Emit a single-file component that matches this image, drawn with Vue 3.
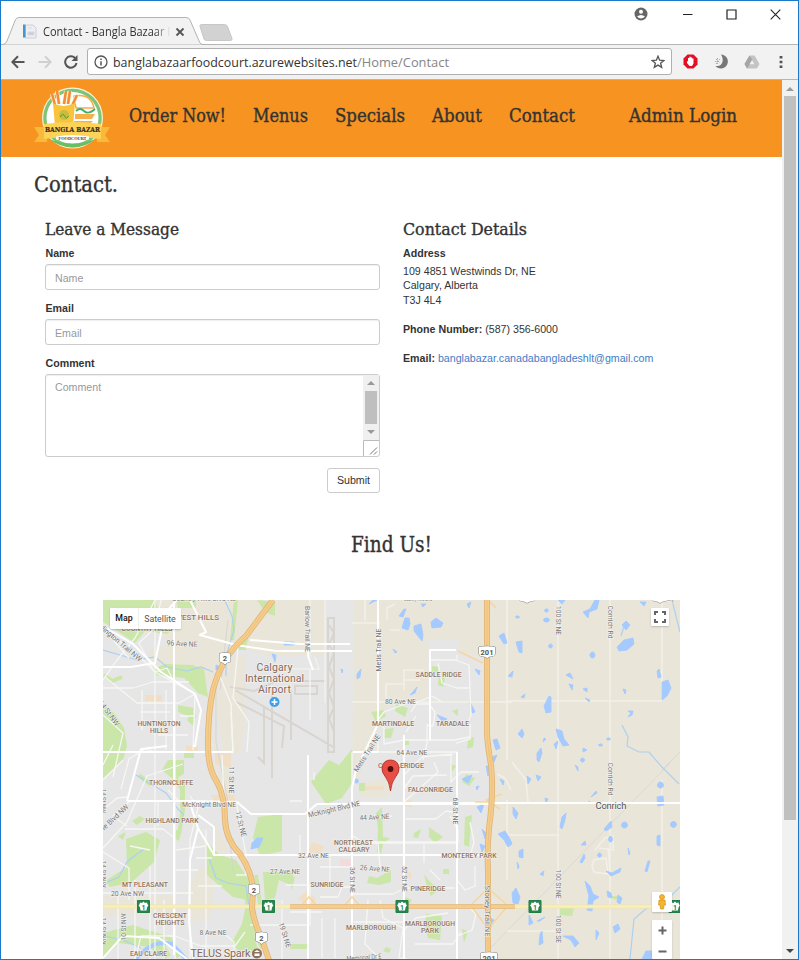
<script setup>
import { h } from 'vue'

// A single line of text set to a fixed measure; colour and font are inherited.
const FitText = (props) =>
  h('svg', { class: 'fit', width: props.w, height: props.lh, viewBox: `0 0 ${props.w} ${props.lh}` }, [
    h('text', { x: 0, y: props.base, textLength: props.w, lengthAdjust: 'spacingAndGlyphs', fill: 'currentColor' }, props.t),
  ])
FitText.props = ['t', 'w', 'lh', 'base']

const nav = [
  { t: 'Order Now!', w: 97 },
  { t: 'Menus', w: 55 },
  { t: 'Specials', w: 70 },
  { t: 'About', w: 50 },
  { t: 'Contact', w: 66 },
  { t: 'Admin Login', w: 108 },
]

// text, centre x, centre y, width, rotation
const districts = [
  ['HARVEST HILLS', 190, 618, 58], ['COUNTRY HILLS', 147, 629, 51], ['HUNTINGTON', 159, 724, 43], ['HILLS', 159, 731, 18],
  ['SADDLE RIDGE', 438.5, 675, 46], ['MARTINDALE', 393, 724, 42], ['TARADALE', 452.5, 724, 33], ['CASTLERIDGE', 401, 766, 46],
  ['THORNCLIFFE', 171, 783, 44], ['HIGHLAND PARK', 172, 821, 53], ['MT PLEASANT', 145, 884.5, 46], ['CRESCENT', 170, 916, 34],
  ['HEIGHTS', 170, 923, 29], ['EAU CLAIRE', 148.5, 954, 37], ['FALCONRIDGE', 430.5, 790, 45], ['NORTHEAST', 353.5, 842.5, 39],
  ['CALGARY', 354, 849.5, 31], ['MONTEREY PARK', 469, 855.5, 55], ['SUNRIDGE', 327, 885, 33], ['PINERIDGE', 428, 889, 35],
  ['MARLBOROUGH', 371, 927.5, 50], ['MARLBOROUGH', 430, 924, 50], ['PARK', 430, 931, 18],
]
const streets = [
  ['Country Hills Blvd NE', 204, 598.5, 64, 0], ['Country Hills Blvd', 418, 598.5, 28, 0], ['Country', 665, 598.5, 18, 0],
  ['96 Ave NE', 182, 643.5, 31, 3], ['rlington Trail NW', 121, 643, 52, 40], ['14 St NW', 109, 713, 30, 54],
  ['11 St NE', 232, 780, 27, 90], ['Barlow Trail NE', 308, 629, 46, 90], ['Metis Trail NE', 378, 650, 43, -90],
  ['80 Ave NE', 400.5, 701.5, 31, 0], ['Metis Trail NE', 367, 753, 43, -57], ['64 Ave NE', 412, 752.5, 31, 0],
  ['100 St NE', 558.5, 620.5, 29, 90], ['Conrich Rd', 610.5, 622, 33, 90], ['Conrich Rd', 610.5, 779, 33, 90],
  ['McKnight Blvd NE', 209, 804, 54, 0], ['ie Blvd NW', 115, 817, 34, -43], ['12 St NE', 241, 824, 26, 76],
  ['27 Ave NE', 285, 871.5, 30, 0], ['20 Ave NW', 127.5, 893.5, 33, 0], ['8 Ave NE', 213, 932, 27, 0],
  ['10 St NW', 123.5, 927, 27, -90], ['19 St NE', 285, 935, 26, 72], ['14 St NW', 104, 801, 24, 90],
  ['14 St NW', 104, 874, 27, 90], ['14 St NW', 104, 931, 27, 90], ['McKnight Blvd NE', 334, 809, 53, -13],
  ['44 Ave NE', 374.5, 817, 30, -3], ['32 Ave NE', 313.5, 855.5, 31, 0], ['26 Ave NE', 375, 868.5, 30, 4],
  ['36 St NE', 353, 880, 26, 90], ['52 St NE', 404.5, 879, 26, 90], ['68 St NE', 456, 811, 27, 90],
  ['Stoney Trail NE', 487.5, 911, 51, 90], ['Memorial Dr E', 364, 957.5, 35, -4], ['100 St NE', 558.5, 884, 29, 90],
  ['100 St SE', 558.5, 929, 28, 90],
]

const parks = [
  'M103 600h52l4 12 16 15-8 7-22-3-10 12-22-15-10-6z', 'M152 669l14-5 26 1 12 4 4 28-10-4-14-15-28-3z',
  'M103 704l12 10 9 14 3 18-4 14-12 12-8 6z', 'M126 839l20-7 14 8-6 22-22 20-22 5-5-6 22-14z',
  'M206 842l14 13 16 5 18 28-1 13-20-4-26-22z', 'M258 817l24-3v37l-22 5-7-18z',
  'M311 782l18-22 10 5 13-16v34l-10 15-16 6z', 'M246 905l12 45-16 6-10-14 10-18z', 'M263 872h30v14l-14-6-4 18-10 2z',
  'M103 933l30-8 24 8 14 22-6 4-16-12-30-4-16 16z', 'M132 821l8-5 5 3-8 6z', 'M176 600h20v8h-18z',
  'M168 760h16v14l-10 6-12-10z', 'M240 638h8l-2 12h-8z', 'M257 600l18 2v14l-10-4z', 'M178 705l16 3-2 10-14-6z',
  'M184 752h10v6h-10z', 'M192 711l4 5-3 10-6-6z', 'M371 712l12-2 3 6-10 6z', 'M384 729l10-1-3 10h-7z', 'M403 740h6v5h-6z',
  'M396 704l12 4-3 9-10-6z', 'M439 674l6 4-2 9-5-2z', 'M432 666l7 1-1 6-6-1z', 'M452 711l6-2v7z', 'M468 739l6-2-1 10-6 2z',
  'M450 764l6 2-4 6z', 'M466 774l9 4-6 8-7-4z', 'M376 813l6-6 1 30 7 1-7 6-2 10-4-2 1-22z', 'M414 833l7-4-3 9-5-1z',
  'M429 827l14 10-8 6-6-6z', 'M465 817l7-2-3 32-5-2z', 'M369 876l8 2 14-8v12l-12 3-12-2z', 'M424 874l6 8 9 7-8 7-4-9z',
  'M443 869h6v5h-6z', 'M426 914l16 2-2 24-12-2-3-12z', 'M462 929l6 2-4 12z', 'M386 947l5 2-2 4-6-2z', 'M404 896l8 4-7 12z',
  'M176 830l5 2-2 9-5-3z', 'M118 836l8-4-3 8z', 'M290 944h18v5h-18z', 'M290 881l5-5-3 14z',
  'M560 908h14l-2 8-12-1z', 'M609 896h10l-3 4z', 'M359 783h6v8h-6z',
]
const greens = 'M140 600l5 18 26 6M183 780v30l-4 24M260 905l-4-30M104 675l8 6 10-4M222 872l24 24 4 22 12 30M174 775l8 14v20M150 933l20 6 8 18M236 600l-4 40M139 775l12 10'

const tanBlocks = [
  'M155 600h170v55h-62l-28-10-16 26-8 38-2-24-30-16-26 0-4-20 18-3z', 'M354 600h326v359h-186l-3-95 4-75-6-40 0-84-9-8-20-6v-12h-32v60h-30l-20 20v28l-12 12-6 18-8 10z',
  'M210 712l8 34 14 34-2 24-12-28z', 'M222 655h24v60l-6 38h-16l-10-50z', 'M103 896h70v20h-70z', 'M186 890l14-24 14 10-4 44-20 2z', 'M214 820l12 26 4 26-14-12z',
  'M359 783l26-4 6 12-4 6h-28z',
]
const warmBlocks = [
  'M145 695h17v6h-17z', 'M215 752h16v16l-16-4z', 'M186 745l12 2v6h-12z', 'M211 795h24v12h-18z', 'M312 842l12 4-4 10-12-3z', 'M362 786h22v4h-22z', 'M405 800h7v7h-7z', 'M298 898l10-8 8 10-6 8z', 'M405 872h6v8z',
]
const minor = [
  'M103 630l30 20 22 22 40 22-16 9h-42l-32-26', 'M103 680l14-20 18-22 20-38', 'M155 673l-16-30 16-15 6-28', 'M155 600v70v290',
  'M175 960V810 684l-8-16-12 4', 'M155 752l-10-3-16 10-8 30', 'M155 752h78l-2-48-12-30', 'M195 694l-2 56', 'M103 688h30l20-6h36',
  'M103 715l20 18-10 44', 'M222 755l2 45', 'M233 752l-2-40M247 752l2-30-16-24 6-60', 'M135 960l6-24 34 0 26 10h34l10-14', 'M103 848l24-26 20-46 36-12',
  'M127 826l-14-10 17-15', 'M103 852l26 16 0 32', 'M125 829h38l10 8', 'M103 780l20-20M103 810l14-12 11-1', 'M190 960V840l8-32-8-12',
  'M206 830v130M103 893h90M118 896v63M135 880v80M150 866v94M164 900v60', 'M250 925h60v-40h-24M282 900v59', 'M220 930l14 12v17',
  'M236 801l10 54 0 20h-10', 'M310 669v51', 'M457 660v-5',
  'M430 660h25l14 5 2 50-4 10M438 663l4 20 15 5h12',
  'M378 720l6-8 26-10 8 0 14-6 10 6', 'M411 712l5-8h13l6 8-2 14-6-1v18l-4 17M416 716l-10 16M378 720l6 8v16l20-4h50l16-3M378 736v16M470 724v15l-14 4',
  'M457 752v208M404 752v206M353 752h104M352 752v208', 'M403 790l10-14 34-1M404 775l18-18 31-3M451 754v28l10-10 18 0M434 762l4 10-34 30',
  'M384 776l16-14M404 819h32l10-8 12 2M370 818l22-2M353 836l10 6h95v-12l-8-14', 'M352 843h106M320 897h18l4-10h11M353 894h40l12-6h50',
  'M460 856h10l4-14-4-20M457 880l8 10 10-4v-20', 'M354 922h50M368 900l-3 44 14 14M404 930l12-12 32-5M415 944h38l8-12M458 936l14-6 4-16-8-8',
  'M380 900l3 18 20 10-4 30 8 1M314 780v-8M290 801h12M322 918l0 40M335 918v40M290 912h32M320 867h33',
  'M103 765l10-20M142 690v40M166 690v60M140 712h30M158 735h30M113 640l16 18M180 716h14M168 790l12 12M158 800v26M206 846l-30 4M130 846l20 4M196 858h16M198 886h24M176 870h22M300 835v20M330 855v28M378 843l2 24M424 843v20M430 870l10 10',
]
const faint = [
  'M507 600v160M507 701h155M558 600v359M610 600v359M662 600v101M662 780v179M507 835h52M507 800v80M507 931h51M511 790l-6-12-8-4M512 762l14 18 2 22',
  'M595 850l10-12 8-2v14l-14-2M592 866l2-6 12-2 2 16-14-2zM610 870l-2-22', 'M352 702h160', 'M310 600v57M325 600v103M289 669h30l-4-12', 'M352 623h28M365 600v21',
  'M387 620v-12l8-4M390 630h10M404 690v-20h20M404 680h16M386 700v-16h18',
]
const major = [
  'M103 667l28 0 24-4 10-50 12-13', 'M103 626l30 18 28 28 34 22 6 16-6 36h-2', 'M103 752h130', 'M127 801h62l48 1 14 12h54l12-10h175', 'M127 801l14-52 26-3',
  'M189 800l9 28 12 20 4 7h86M174 600v355M198 828l-8 32-1 62 4 37', 'M190 600l16 32-6 3 36 10 40 6h76', 'M378 600v124l-22 46-4 18v171', 'M308 755V960',
  'M290 855h200M353 752h25M404 735v224M457 752v207M352 803h328M308 640v16l5 14', 'M430 740v-90h26',
  'M103 958l20-22 36 2 28 21', 'M214 855v-28l-16-12', 'M250 640l50 4h50',
]
const runways = 'M328 618v134h6V618zM329 625l5 8-5 12 5 8-5 14 5 12-5 14 5 14-5 12 5 12M291 690v50M264 707v56l-6-6M272 688v90M235 690l100 58M230 687l24 4 22-10h50M236 702l48 24-2 22M295 686h22v8h-22z'
const rural = 'M480 959l190-196M662 770l18-18'
const creeks = 'M103 650l34 10 18-3 12 10 20 4 14-4 12 5M136 775l30 18 12 16 6 6M103 884l16-7 8-15 10-8 9-6M209 858l7 20 12 5 18 3 3 20 14 38 7 16M622 725l6 12-1 9 12 6h10l12 14 18 18M672 600l8 32M103 936l20 4 18 8M624 626l-3 10M630 959l4-40 14-12 14-2 18-18M225 601l7 15 2 14-8 26 0 20'
const lakes = [
  'M617 647l7-7 9-2 1 6-7 6-8 1z', 'M622 625l4-4 4 4-4 5z', 'M583 612l7-3 5-9h4l-2 9-8 3-1 6z', 'M662 682l6-2 3 8-4 8-5 4z', 'M544 706l5-10 2 1v15l-5 1z', 'M558 600h7l-3 4z',
  'M499 636l5-3 3 10-3 1z', 'M516 642l6-1v12l-3-1z', 'M508 676l5-5-1 6z', 'M566 675l4-2 3 6z', 'M569 684l4 1-1 5z', 'M583 689l4-1v4z', 'M585 698l5 2-1 2z',
  'M657 671l2-2 2 8-3 1z', 'M592 658a2.500 3 0 1 1 1 0z', 'M546 612a2 1.500 0 1 1 1 0z', 'M546 622a3 2 0 1 1 1 0z', 'M517 618a2 1 0 1 1 1 0z', 'M550 648a2 2 0 1 1 1 0z', 'M521 697l4-3-1 4z',
  'M623 689l3 1-1 4z', 'M628 711l5 0-1 4-4 2 3-4z', 'M518 734l4-5 2 5-2 4z', 'M556 729l6 2 2 8 5 6-6 1-5-9z', 'M537 753l4-5 1 5-3 9-2-2z', 'M554 744l4-3-2 8z',
  'M493 740l4-1 3 9-4 2z', 'M492 757l5-2-3 7z', 'M486 766h4l-2 10z', 'M583 748l4 2-4 2z', 'M575 765l3 2v4z', 'M582 762a2 2 0 1 1 1 0z', 'M544 738l2 1-3 3z', 'M608 740a2 1 0 1 1 1 0z', 'M600 746a2 1 0 1 1 1 0z',
  'M527 776l4 3-3 5z', 'M500 779l4 2-1 4z', 'M545 798l3 1-2 4z', 'M562 817l4-4-1 7-3 9-2-2z', 'M513 807l5 6-2 6-3-5z', 'M498 834l7-3 5 8 2 5-4 3-4-7z', 'M519 851l4-2v9l-4-1z',
  'M657 797l6-1 1 9-6 1z', 'M660 788a3 3 0 1 1 1 0z', 'M675 827a3 3 0 1 1 1-1z', 'M657 836l3-1v11l-3-1z', 'M624 828a3 3 0 1 1 1 0z', 'M604 829l7-8 1 6-6 4z', 'M610 842a2 3 0 1 1 1 0z', 'M581 845l4-4 1 4z', 'M580 862l4-8 1 4-3 5z',
  'M599 857a2 2 0 1 1 1 0z', 'M645 871l3-10h2l-3 11z', 'M606 871l6 2 9-5-1 4-9 4z', 'M591 797l5-6 1 2z', 'M587 803l3-2-2 3z', 'M536 775l5 2-3 4z', 'M585 881l5 5 3 8 6 3-6 4-1 10-5-1 2-14z', 'M512 893l4-5 4 9-2 7-5-1z',
  'M607 891l4 2 1 5-4-1z', 'M618 895l4 3-2 6-3-2z', 'M613 927l5-3 2 5-5 4z', 'M540 934l2-3 1 12-4 2z', 'M596 930l3 3-3 7z', 'M540 874l4-3-1 5z', 'M529 915l4 8-4 2z', 'M563 936l10 0 6 7-4 4-4-7z', 'M537 921l8-4-5 4z', 'M642 959l4-8h6v8z', 'M486 916l8 4-6 14z', 'M517 862l2 4-1 3z', 'M628 848l2 5-1 2z',
  'M482 829l4 4-1 6z', 'M480 844l5 2-3 6z', 'M477 807l7-3-3 9z', 'M462 779l10-4-4 8z', 'M399 616l5-7 2 0-3 8zM402 628l3-10 4 0 1 6-2 6z', 'M414 626l7-2 2 11-1 6-8-10z', 'M431 622l5-4 7 5-2 4-9 1z', 'M421 604l5 0-3 3z', 'M393 649l4 3-2 1z', 'M357 674l4-5-1 8-3 2z', 'M341 669l2 1-1 3z', 'M412 693l5-6-2 6-5 2z', 'M470 702l5 10-3 1z', 'M437 715l10 4-5 2z', 'M252 843l5-5 6 0-4 9-8 2z', 'M284 642h10v3h-10z', 'M272 654l4 1-1 7z', 'M216 665l4 2-4 3z', 'M356 783a2 2 0 1 1 1 0z', 'M369 604l8-4h-4z', 'M467 604l4-2-2 6z', 'M475 669l5 2-1 4z', 'M476 787l3-1-2 4z', 'M640 602h6l-2 4z',
]
const hwy2 = 'M273 600L246 636Q222 656 213 690Q208 712 208 745Q208 769 217 782Q225 796 225 820Q226 840 240 854Q252 872 253 890L252 908Q254 922 262 940L269 960'
const stoney = 'M487 600V735Q488 748 491 765Q494 792 489 828Q487 850 488 870V960'
</script>

<template>
  <div class="window">
    <header class="titlebar">
      <div class="tab">
        <svg class="tab-shape" width="216" height="29" viewBox="0 0 216 29">
          <path d="M0 28.500H3Q6 28 7 25L15.500 3.500Q17 1.500 19 1.500H186Q189 1.500 190 4L199.500 26Q200.500 28.500 203 28.500H216" fill="#f2f2f2" stroke="#b3b3b3" />
        </svg>
        <svg class="favicon" width="15" height="15" viewBox="0 0 15 15">
          <path d="M3.500 1h7.500l3 3v10H3.500z" fill="#eceef2" stroke="#cdd0d6" /><path d="M1 .5h2.500v13H1z" fill="#4b93cd" /><path d="M6 4h4M6 8h6v3H6z" fill="#c6ccd8" stroke="#d8dbe3" />
        </svg>
        <FitText class="tab-title" t="Contact - Bangla Bazaar F" :w="130" :lh="18" :base="13" />
        <svg class="tab-close" width="10" height="10" viewBox="0 0 10 10"><path d="M1.500 1.500l7 7M8.500 1.500l-7 7" stroke="#555" stroke-width="1.800" /></svg>
      </div>
      <svg class="new-tab" width="34" height="18" viewBox="0 0 34 18"><path d="M2.500.5h23q2 0 3 2l4.500 12q.5 2-1.500 2h-24q-2 0-2.500-1.500L1 2.500q-.5-2 1.500-2z" fill="#d2d2d2" stroke="#c7c7c7" /></svg>
      <div class="controls">
        <svg width="14" height="14" viewBox="0 0 14 14"><circle cx="7" cy="7" r="6.500" fill="#666" /><circle cx="7" cy="4.700" r="2" fill="#fff" /><path d="M3 9.500q4-3 8 0-4 4-8 0z" fill="#fff" /></svg>
        <svg width="11" height="11" viewBox="0 0 11 11"><path d="M1 5.500h9.500" stroke="#222" /></svg>
        <svg width="11" height="11" viewBox="0 0 11 11"><path d="M1 1h9v9H1z" fill="none" stroke="#222" stroke-width="1.200" /></svg>
        <svg width="11" height="11" viewBox="0 0 11 11"><path d="M.7.7l9.600 9.600M10.300.7L.7 10.300" stroke="#222" stroke-width="1.100" /></svg>
      </div>
    </header>

    <div class="toolbar">
      <svg class="back" width="14" height="14" viewBox="0 0 14 14"><path d="M13.500 7H1.500M7 1.200L1.300 7 7 12.800" fill="none" stroke="#555" stroke-width="2" /></svg>
      <svg class="forward" width="14" height="14" viewBox="0 0 14 14"><path d="M.5 7h12M7 1.200L12.700 7 7 12.800" fill="none" stroke="#d0d0d0" stroke-width="2" /></svg>
      <svg class="reload" width="14" height="14" viewBox="0 0 14 14"><path d="M12.500 8A5.700 5.700 0 1 1 11 3" fill="none" stroke="#555" stroke-width="2" /><path d="M13.500 0v6h-6z" fill="#555" /></svg>
      <div class="omnibox">
        <svg class="info" width="14" height="14" viewBox="0 0 14 14"><circle cx="7" cy="7" r="6" fill="none" stroke="#555" stroke-width="1.300" /><path d="M7 6.200V10.500M7 3.500v1.500" stroke="#555" stroke-width="1.500" /></svg>
        <div class="url">
          <FitText t="banglabazaarfoodcourt.azurewebsites.net" :w="244" :lh="18" :base="13.5" />
          <FitText class="path" t="/Home/Contact" :w="92" :lh="18" :base="13.5" />
        </div>
        <svg class="star" width="14" height="14" viewBox="0 0 14 14"><path d="M7 1.200l1.600 4 4.300.3-3.300 2.700 1.100 4.200L7 10.100l-3.700 2.300 1.100-4.200L1.100 5.500l4.300-.3z" fill="none" stroke="#555" stroke-width="1.300" /></svg>
      </div>
      <div class="extensions">
        <svg width="15" height="15" viewBox="0 0 15 15"><path d="M4.500.5h6l4 4v6l-4 4h-6l-4-4v-6z" fill="#e30f25" /><path d="M4 7l1 .5V4h1.400V2.800h1.400v.8h1.300v.9h1.400v5L9 12H6.500L4 9z" fill="#fff" /></svg>
        <svg width="16" height="15" viewBox="0 0 16 15"><path d="M8 .5A7 7 0 1 1 2.500 12c6 1 9.500-5 5.500-11.500z" fill="#777" /><path d="M4.500 4v6M2 7.500h5M3 5l4 4M3 10l4-5" stroke="#aaa" stroke-dasharray="1.500 1" /></svg>
        <svg width="16" height="14" viewBox="0 0 16 14"><path d="M5.500.5h5L15.500 9 13 13.500H3L.5 9z" fill="#c4c4c4" /><path d="M5.500.5L.5 9 3 13.500 8.500 5z" fill="#a5a5a5" /><path d="M8 5l-2.400 4.300h4.800z" fill="#f2f2f2" /></svg>
        <svg width="4" height="14" viewBox="0 0 4 14"><path d="M.6 1h2.800v2.600H.6zM.6 5.700h2.800v2.600H.6zM.6 10.400h2.800V13H.6z" fill="#555" /></svg>
      </div>
    </div>

    <div class="viewport">
      <main class="page">
        <nav class="navbar">
          <svg class="logo" width="78" height="66" viewBox="0 0 78 66">
            <circle cx="39.500" cy="33" r="30.500" fill="#f6f3dc" /><circle cx="39.500" cy="33" r="29.300" fill="#7cc576" /><circle cx="39.500" cy="33" r="26" fill="#fff" />
            <path d="M16 54q23 9 47 0-23 17-47 0z" fill="#69bd62" />
            <path d="M41 11q17-3 20 12H43z" fill="#fff" stroke="#f9a94d" stroke-width="1.500" /><path d="M43 26q4-4 8 0t11-2" fill="none" stroke="#3fae70" stroke-width="1.800" />
            <path d="M42 29h20l-3 5H42zM41 36h19l-4 4H42z" fill="#f7b04a" />
            <path d="M22 20l-3-11M26 19l-2-13M31 19l2-13M35 19l2-13M39 21l5-11" stroke="#fff3cf" stroke-width="4" /><path d="M22 20l-3-11M26 19l-2-13M31 19l2-13M35 19l2-13M39 21l5-11" stroke="#f28c38" stroke-width="2.600" />
            <path d="M20 18q10 6 22 0l-2 23H22z" fill="#fac33c" /><circle cx="31" cy="30" r="5" fill="#c8bd3c" /><path d="M27.500 32q2-5 4-1t4 0" fill="none" stroke="#4d973d" />
            <path d="M1 42h14l-1 15H1l5-7zM77 42H63l1 15h13l-5-7z" fill="#f9b93a" /><path d="M11 39q29-4 57 0v15q-28-4-57 0z" fill="#fcd257" />
            <text x="39.500" y="46.500" text-anchor="middle" textLength="55" lengthAdjust="spacingAndGlyphs" class="logo-name">BANGLA BAZAR</text>
            <path d="M23 51.500q16-3 33 0v3q-16 3-33 0z" fill="#fff" /><text x="39.500" y="55" text-anchor="middle" textLength="28" lengthAdjust="spacingAndGlyphs" class="logo-sub">FOODCOURT</text>
          </svg>
          <a v-for="n in nav" :key="n.t" class="nav-link"><FitText :t="n.t" :w="n.w" :lh="26" :base="19" /></a>
        </nav>

        <h2 class="page-title"><FitText t="Contact." :w="84" :lh="30" :base="22" /></h2>

        <div class="columns">
          <form class="message" @submit.prevent>
            <h3 class="section-title"><FitText t="Leave a Message" :w="134" :lh="24" :base="18" /></h3>
            <label>Name</label>
            <input type="text" placeholder="Name" />
            <label>Email</label>
            <input type="text" placeholder="Email" />
            <label>Comment</label>
            <div class="comment">
              <span class="comment-hint">Comment</span>
              <div class="comment-side">
                <div class="mini-scroll"><i class="arrow up"></i><i class="mini-thumb"></i><i class="arrow down"></i></div>
                <svg class="grip" width="16" height="16" viewBox="0 0 16 16"><path d="M.5 16V.5H16" fill="none" stroke="#bbb" /><path d="M7 14.500l7-7M11 14.500l3-3" stroke="#777" /></svg>
              </div>
            </div>
            <button type="submit">Submit</button>
          </form>
          <section class="details">
            <h3 class="section-title"><FitText t="Contact Details" :w="124" :lh="24" :base="18" /></h3>
            <strong class="address-label">Address</strong>
            <address>109 4851 Westwinds Dr, NE<br />Calgary, Alberta<br />T3J 4L4</address>
            <p><strong>Phone Number:</strong> (587) 356-6000</p>
            <p><strong>Email:</strong> <a>banglabazar.canadabangladeshlt@gmail.com</a></p>
          </section>
        </div>

        <h2 class="find"><FitText t="Find Us!" :w="81" :lh="30" :base="22" /></h2>

        <div class="map">
          <svg class="map-canvas" width="577" height="359" viewBox="103 600 577 359">
            <path d="M103 600h577v359H103z" fill="#e6e6e6" />
            <path v-for="d in tanBlocks" :key="d" :d="d" fill="#e9e6d9" />
            <path v-for="d in warmBlocks" :key="d" :d="d" fill="#f0dfc6" />
            <path v-for="d in parks" :key="d" :d="d" fill="#cae6a8" />
            <path :d="greens" fill="none" stroke="#cae6a8" stroke-width="4" />
            <path d="M340 859h11v9h-11z" fill="#f3dadd" />
            <path :d="runways" fill="none" stroke="#d8d4cf" stroke-width="2" />
            <path d="M216 672v70l12 60M224 800l10 74M228 620l-8 70" fill="none" stroke="#d5d5d5" stroke-width="1" />
            <path :d="rural" fill="none" stroke="#dad8d6" />
            <path :d="creeks" fill="none" stroke="#add0f0" stroke-width="1.200" />
            <path d="M136 959q16-20 36-15l14 15" fill="none" stroke="#a5caff" stroke-width="4" />
            <path v-for="d in faint" :key="d" :d="d" fill="none" stroke="#f2f0e8" stroke-width="1.500" />
            <path v-for="d in lakes" :key="d" :d="d" fill="#a5caff" stroke="#a5caff" stroke-width=".9" stroke-linejoin="round" />
            <path v-for="d in minor" :key="d" :d="d" fill="none" stroke="#f6f6f3" stroke-width="1.300" stroke-linejoin="round" />
            <path v-for="d in major" :key="d" :d="d" fill="none" stroke="#fff" stroke-width="2" stroke-linejoin="round" />
            <g fill="none">
              <path d="M103 906.500h577" stroke="#ece3b6" stroke-width="4" /><path d="M103 906.500h577" stroke="#fcefb0" stroke-width="2.500" />
              <path d="M470 906l18-18 18 16M472 907l16 22 18-21M475 802h18M301 906l8-9 8 9M344 906l8-9 8 9M458 651l25 12M486 800l16-6M486 800l14 9M488 600l8 8" stroke="#f6d6a0" stroke-width="1.500" />
              <path d="M290 906.500h225" stroke="#e2b478" stroke-width="4.500" /><path d="M290 906.500h225" stroke="#f6cd88" stroke-width="3" />
              <path :d="hwy2" stroke="#deb47d" stroke-width="6" /><path :d="hwy2" stroke="#f6cd88" stroke-width="4.300" />
              <path :d="stoney" stroke="#deb47d" stroke-width="6" /><path :d="stoney" stroke="#f6cd88" stroke-width="4.300" />
              <path :d="hwy2" stroke="#e9bd7c" stroke-width=".7" /><path :d="stoney" stroke="#e9bd7c" stroke-width=".7" />
            </g>
            <g class="street">
              <text v-for="(s, i) in streets" :key="i" :transform="`translate(${s[1]} ${s[2]}) rotate(${s[4]})`" y="2.600" :textLength="s[3]" lengthAdjust="spacingAndGlyphs">{{ s[0] }}</text>
            </g>
            <g class="district">
              <text v-for="(s, i) in districts" :key="i" :x="s[1]" :y="s[2] + 2.4" :textLength="s[3]" lengthAdjust="spacingAndGlyphs">{{ s[0] }}</text>
            </g>
            <g class="place">
              <text x="274.500" y="671" textLength="36">Calgary</text><text x="274.500" y="682" textLength="59">International</text><text x="274.500" y="693" textLength="33">Airport</text>
              <text x="220.500" y="957" textLength="60" class="spark">TELUS Spark</text>
            </g>
            <text class="town" x="611" y="809" textLength="31">Conrich</text>
            <circle cx="274.500" cy="702" r="5" fill="#3e9ee8" /><path d="M274.500 699v6M271.500 702h6" stroke="#fff" stroke-width="1.500" />
            <circle cx="257" cy="953.500" r="5" fill="#91705c" /><path d="M254 952l3-2 3 2zM254.500 953.500h5v2.500h-5z" fill="#fff" />
            <g v-for="(s, i) in [[225, 658.5, '2'], [254, 890, '2'], [261.500, 938, '2'], [487, 652, '201'], [489, 958, '201'], [527, 597, '201'], [660, 597, '201']]" :key="i" class="shield" :transform="`translate(${s[0]} ${s[1]})`">
              <path :d="s[2] === '2' ? 'M-5.500 -5q5.500-1.500 11 0v8q-3 .5-5.500 3-2.500-2.500-5.500-3z' : 'M-8 -5q8-1.500 16 0v7q-1 3-5 2.500l-3 1.500-3-1.500q-4 .5-5-2.500z'" fill="#fff" stroke="#777" />
              <text y="2.800">{{ s[2] }}</text>
            </g>
            <g v-for="x in [143.5, 268.5, 402, 535, 675]" :key="x" class="route" :transform="`translate(${x} 906.500)`">
              <path d="M-6-6H6V6H-6z" fill="#27844f" stroke="#1d7844" /><path d="M0-5l1.500 1.500 2-.5.5 2L5-1.500 3.500 1 3 4h-6L-3.500 1-5-1.500-4-2-3.500-4l2 .5z" fill="#fff" /><text y="3">1</text>
            </g>
            <path d="M390.500 791q-1-9-5-14-4-5-3.500-9 1-8 8.500-8t8.500 8q.5 4-3.500 9-4 5-5 14z" fill="#ea4d43" stroke="#a92c25" stroke-width=".8" /><circle cx="390.500" cy="769" r="2.900" fill="#4f100d" />
          </svg>
          <div class="map-type"><b>Map</b><span>Satellite</span></div>
          <div class="map-full"><svg width="12" height="12" viewBox="0 0 12 12"><path d="M1 4V1h3M8 1h3v3M11 8v3H8M4 11H1V8" fill="none" stroke="#666" stroke-width="2" /></svg></div>
          <div class="pegman"><svg width="10" height="16" viewBox="0 0 10 16"><circle cx="5" cy="3" r="2.500" fill="#f5b62e" stroke="#c98713" stroke-width=".6" /><path d="M2 6h6l.5 5H7l-.5 4h-3L3 11H1.500z" fill="#f5b62e" stroke="#c98713" stroke-width=".6" /></svg></div>
          <div class="map-zoom"><svg width="9" height="32" viewBox="0 0 9 32"><path d="M.5 5.500h8M4.500 1.500v8M.5 26.500h8" stroke="#666" stroke-width="2" /></svg></div>
        </div>
      </main>
      <div class="scrollbar"><i class="arrow up"></i><i class="thumb"></i><i class="arrow down dark"></i></div>
    </div>
  </div>
</template>

<style>
body { margin: 0; background: #fff; }
</style>

<style scoped>
* { box-sizing: border-box; }
svg { display: block; flex: none; }
.fit { overflow: visible; }
.window { width: 799px; height: 960px; overflow: hidden; border: 1px solid #1979ca; display: flex; flex-direction: column; background: #fff; font-family: "Liberation Sans", Arial, sans-serif; font-size: 10.65px; color: #333; }
.titlebar { height: 44px; flex: none; display: flex; align-items: flex-start; padding-top: 15px; border-bottom: 1px solid #b6b6b6; }
.tab { position: relative; width: 198px; height: 29px; flex: none; display: flex; align-items: center; padding: 2px 0 0 21px; }
.tab-shape { position: absolute; left: -1px; top: 0; }
.favicon, .tab-title, .tab-close { position: relative; }
.tab-title { margin-left: 6px; font: 12px "Open Sans", sans-serif; color: #333; mask-image: linear-gradient(90deg, #000 86%, transparent 98%); }
.tab-close { margin-left: 2px; }
.new-tab { margin-top: 8px; }
.controls { margin: -10px 17px 0 auto; height: 17px; display: flex; align-items: center; gap: 33px; }
.controls svg:first-child { margin: -1px 1px 0 0; }
.toolbar { height: 35px; flex: none; display: flex; align-items: center; padding: 0 15px 1px 10px; background: #f2f2f2; border-bottom: 1px solid #b6b6b6; }
.forward { margin-left: 13px; }
.reload { margin-left: 12px; }
.omnibox { width: 585px; height: 27px; margin-left: 9px; display: flex; align-items: center; padding: 0 6px; background: #fff; border: 1px solid #b0b0b0; border-radius: 3px; }
.url { display: flex; margin-left: 5px; font: 13px "Open Sans", sans-serif; color: #333; }
.path { color: #858585; }
.star { margin-left: auto; }
.extensions { margin-left: auto; display: flex; align-items: center; gap: 15px; }
.extensions svg:last-child { margin-left: 4px; }
.viewport { flex: 1; min-height: 0; display: flex; }
.page { width: 781px; height: 100%; overflow: hidden; }
.navbar { height: 77px; display: flex; align-items: center; padding-left: 32px; background: #f79421; color: #333; }
.logo { margin-top: -2px; }
.nav-link { font: 18px "DejaVu Serif Condensed", "DejaVu Serif", serif; margin-left: 27px; margin-top: -6px; }
.nav-link:nth-child(2) { margin-left: 18px; }
.nav-link:last-child { margin-left: 54px; }
.nav-link, .page-title, .section-title, .find { stroke: currentColor; stroke-width: .35px; }
h2, h3, p { margin: 0; font-weight: 400; }
.page-title { height: 60px; padding: 13px 0 0 33px; font: 22px "DejaVu Serif Condensed", "DejaVu Serif", serif; }
.section-title { height: 26px; font: 17px "DejaVu Serif Condensed", "DejaVu Serif", serif; }
.columns { display: grid; grid-template-columns: 335px 1fr; gap: 23px; padding-left: 44px; }
.message { display: flex; flex-direction: column; }
label { height: 21px; line-height: 20px; font-weight: 700; padding-left: .5px; }
input { height: 26px; margin: 0 0 8px; padding: 1px 9px 0; border: 1px solid #ccc; border-radius: 3px; font: inherit; background: #fff; box-shadow: inset 0 1px 1px #0001; }
input::placeholder { color: #999; opacity: 1; }
.comment { height: 83px; display: flex; justify-content: space-between; border: 1px solid #ccc; border-radius: 3px; box-shadow: inset 0 1px 1px #0001; }
.comment-hint { padding: 6px 9px; color: #999; }
.comment-side { width: 16px; }
.mini-scroll { height: 65px; background: #f0f0f0; display: flex; flex-direction: column; align-items: center; justify-content: space-between; padding: 6px 0; }
.mini-thumb { width: 12px; height: 33px; background: #bfbfbf; }
.arrow { width: 0; height: 0; border: 4px solid transparent; }
.up { border-top: 0; border-bottom-color: #999; }
.down { border-bottom: 0; border-top-color: #999; }
.dark { border-top-color: #444; }
button { align-self: flex-end; width: 53px; height: 25px; margin-top: 11px; padding: 0 0 1px; border: 1px solid #ccc; border-radius: 3px; background: #fff; font: inherit; color: #333; }
.address-label { display: block; height: 21px; line-height: 20px; }
address { font-style: normal; line-height: 14.3px; height: 58px; }
.details p { height: 29.300px; line-height: 14px; }
.details a { color: #457bc4; }
.find { height: 70px; margin-top: 37px; display: flex; justify-content: center; font: 22px "DejaVu Serif Condensed", "DejaVu Serif", serif; }
.map { position: relative; width: 577px; height: 359px; margin: 0 0 0 102px; font: 8.800px Roboto, sans-serif; }
.map-type, .map-full, .pegman, .map-zoom { position: absolute; background: #fff; border-radius: 1px; box-shadow: 0 1px 2px #0003; display: flex; align-items: center; justify-content: center; }
.map-type { left: 7px; top: 8px; width: 71px; height: 21px; }
.map-type b { width: 29px; height: 21px; line-height: 21px; text-align: center; color: #111; font-weight: 500; border-right: 1px solid #eee; }
.map-type span { flex: 1; text-align: center; color: #555; }
.map-full { left: 548px; top: 8px; width: 18px; height: 18px; }
.pegman { left: 549px; top: 292px; width: 20px; height: 20px; }
.map-zoom { left: 549px; top: 320px; width: 20px; height: 39px; align-items: flex-start; padding-top: 5px; }
.street, .district, .place, .town, .shield, .route { font-family: Roboto, sans-serif; text-anchor: middle; paint-order: stroke; }
.street { font-size: 7.400px; fill: #747474; stroke: #f5f5f5; stroke-width: 1px; }
.district { font-size: 7px; font-weight: 500; fill: #8f7462; stroke: #f4f2ef; stroke-width: 1px; }
.place { font-size: 10.500px; fill: #84695a; stroke: #f4f2ef; stroke-width: 1.500px; }
.spark { font-size: 11px; }
.town { font-size: 9.500px; fill: #555; stroke: #f4f2ef; stroke-width: 1px; }
.shield { font-size: 7.500px; font-weight: 700; fill: #555; }
.route { font-size: 7px; font-weight: 700; fill: #27844f; }
.logo-name { font: 700 8px "DejaVu Serif Condensed", serif; fill: #3b2d1c; stroke: #3b2d1c; stroke-width: .2px; }
.logo-sub { font: 700 4.500px "Liberation Serif", serif; fill: #443; }
.scrollbar { width: 16px; height: 100%; padding: 7px 0 6px; background: #f1f1f1; display: flex; flex-direction: column; align-items: center; }
.thumb { width: 12px; height: 724px; margin-top: 5px; background: #c0c0c0; }
.scrollbar .down { margin-top: auto; }
</style>
